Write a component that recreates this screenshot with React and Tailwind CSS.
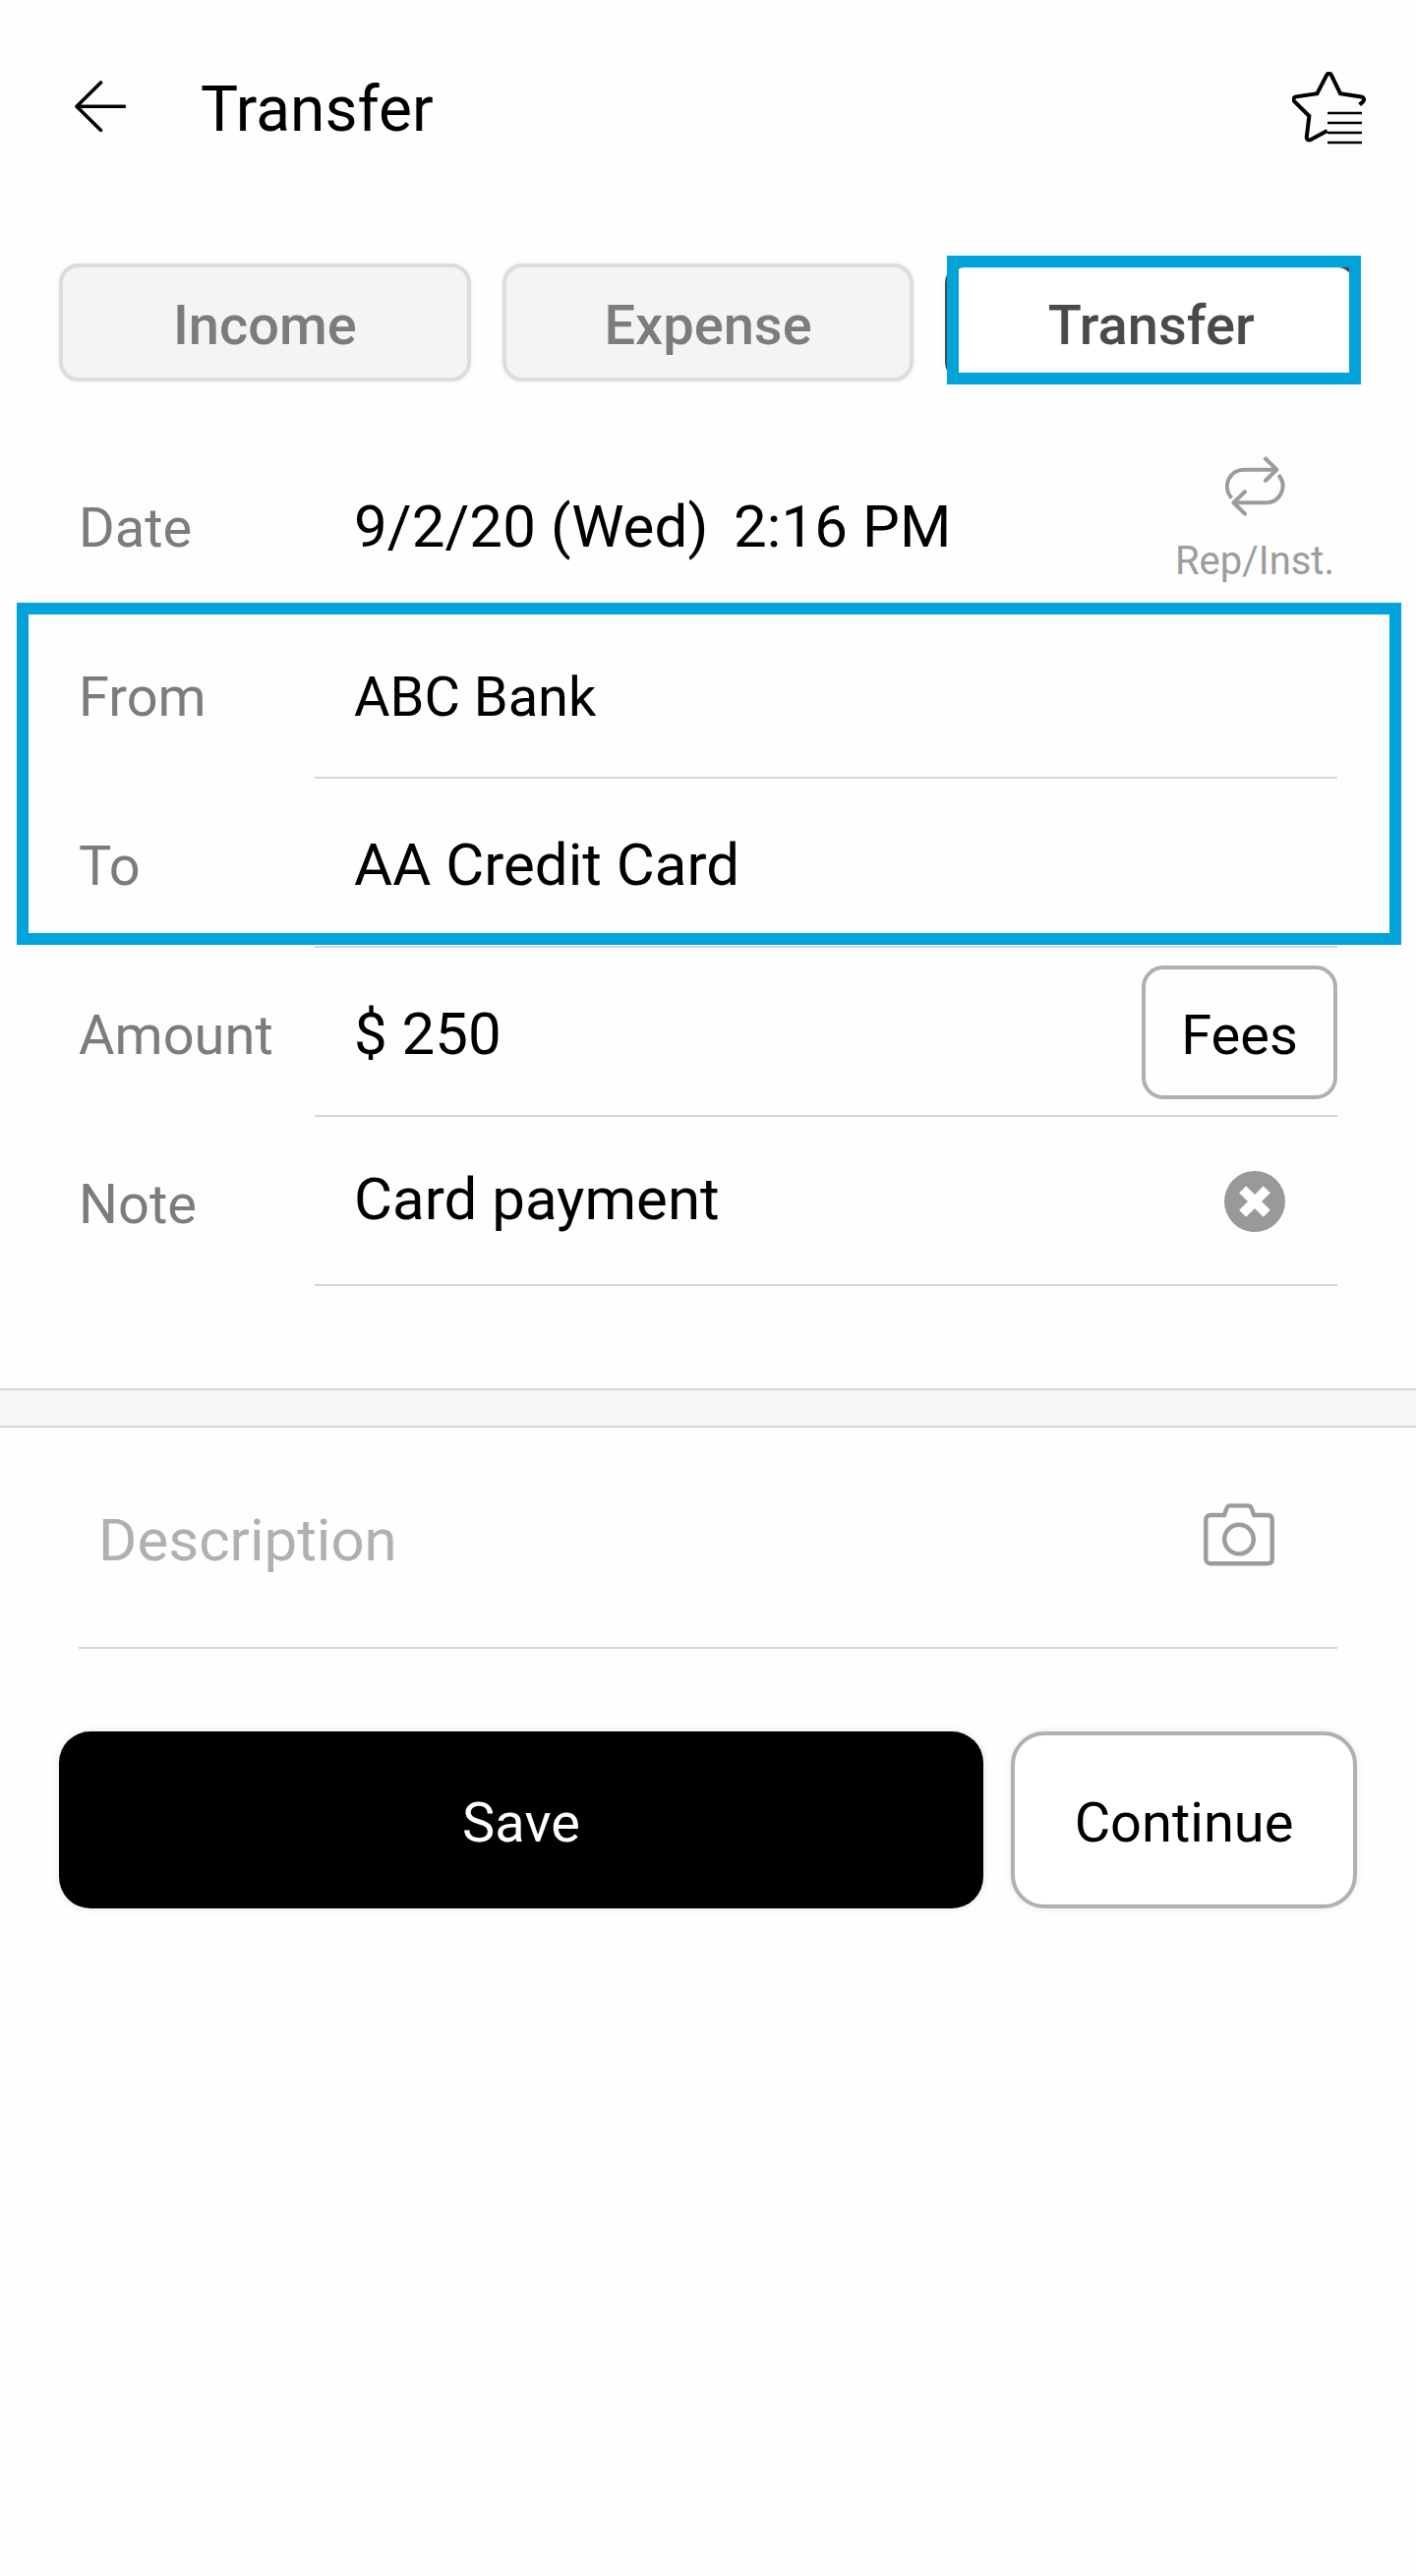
import React, { useState } from 'react'

const tabs = ['Income', 'Expense', 'Transfer']

const BackIcon = () => (
    <svg className='w-[52px] h-[52px]' viewBox='0 0 52 52' fill='none' stroke='currentColor' strokeWidth='3.6' strokeLinecap='round' strokeLinejoin='round'>
        <path d='M26.5 2 2 26.3 26.5 50.5' />
        <path d='M2.5 26.3H50.5' />
    </svg>
)

const StarListIcon = () => (
    <svg className='w-[76px] h-[74px]' viewBox='0 0 76 74' fill='none' stroke='currentColor'>
        <path
            d='M35.7 60 19 69c-2.4 1.2-4.5-.2-4.2-2.7l2.6-21.2L2.3 30.2c-1.7-1.8-.8-4.4 1.6-4.8L25.4 22.2 35.3 3.2c1.1-2.1 3.4-2.1 4.5 0L49 22.2l21.6 3.3c2.4.4 3.3 3 1.6 4.8L68.6 33.5'
            strokeWidth='4'
            strokeLinejoin='miter'
        />
        <path d='M36 42H71M36 52H71M36 62H71M36 72H71' strokeWidth='2.6' />
    </svg>
)

const RepeatIcon = () => (
    <svg className='w-[62px] h-[62px]' viewBox='0 0 62 62' fill='none' stroke='currentColor' strokeWidth='4' strokeLinecap='round'>
        <path d='M5.5 41.2A17 17 0 0 1 19 13.7H52' />
        <path d='M41 2.5 52.3 13.7 41 24.8' strokeLinejoin='round' />
        <path d='M55.2 20.3A17 17 0 0 1 42.5 47.3H9' />
        <path d='M20 36.2 8.5 47.3 20 58.6' strokeLinejoin='round' />
    </svg>
)

const ClearIcon = () => (
    <svg className='w-[62px] h-[62px]' viewBox='0 0 62 62'>
        <circle cx='31' cy='31' r='31' fill='#999999' />
        <path d='M18.7 18.7 43.3 43.3M43.3 18.7 18.7 43.3' stroke='#ffffff' strokeWidth='10' />
    </svg>
)

const CameraIcon = () => (
    <svg className='w-[72px] h-[64px]' viewBox='0 0 72 64' fill='none' stroke='currentColor' strokeWidth='4.4'>
        <path d='M2.3 17Q2.3 12 7.3 12H20.8L23.4 5.2Q24.5 2.4 27.3 2.4H44.8Q47.6 2.4 48.7 5.2L51.3 12H64.7Q69.7 12 69.7 17V56.4Q69.7 61.2 64.7 61.2H7.3Q2.3 61.2 2.3 56.4Z' />
        <circle cx='36' cy='36.6' r='14.8' />
    </svg>
)

// One line of the form: grey label on the left, value above a divider
const Row = ({ label, children, divider = true }) => (
    <div className='flex h-[172px] pl-20 pr-20'>
        <p className='w-60 shrink-0 pt-14 text-[56px] leading-[66px] text-[#7c7c7c]'>{label}</p>
        <div className={`flex flex-1 justify-between pl-10 border-b-2 ${divider ? 'border-[#d6d6d6]' : 'border-transparent'}`}>
            {children}
        </div>
    </div>
)

const App = () => {

    const [active, setActive] = useState('Transfer')

    return (
        <div className='w-[1440px] h-[2620px] bg-[#fefefe] overflow-hidden text-black font-[Roboto,sans-serif]'>
            {/* Header */}
            <div className='flex h-[268px] items-start justify-between pl-[76px] pr-[50px]'>
                <div className='flex'>
                    <div className='pt-[82px]'><BackIcon /></div>
                    <h1 className='pt-[74px] pl-[76px] text-[64px] leading-[75px]'>Transfer</h1>
                </div>
                <div className='pt-[73px]'><StarListIcon /></div>
            </div>

            {/* Tabs */}
            <div className='flex gap-8 h-[120px] px-[60px]'>
                {tabs.map((tab) => (
                    <div key={tab} className='relative flex-1'>
                        <button
                            onClick={() => setActive(tab)}
                            className={`w-full h-full border-4 rounded-[20px] pt-1.5 text-[56px] leading-[66px] font-medium shadow-[0_0_6px_rgba(0,0,0,0.06)] ${active === tab ? 'bg-white border-[#4a4a4a] text-[#4a4a4a]' : 'bg-[#f4f4f4] border-[#dcdcdc] text-[#7c7c7c]'}`}
                        >
                            {tab}
                        </button>
                        {active === tab && (
                            <div className='absolute -top-2 left-[1.4px] -right-[4.4px] h-[131px] border-[12.6px] border-[#00a3da] pointer-events-none'></div>
                        )}
                    </div>
                ))}
            </div>

            {/* Form */}
            <div className='relative pt-[60px]'>
                <Row label='Date' divider={false}>
                    <div className='flex pt-[53px] text-[60px] leading-[70px]'>
                        <p className='w-[386px] whitespace-nowrap tracking-[0.1px]'>9/2/20 (Wed)</p>
                        <p className='whitespace-nowrap tracking-[0.1px]'>2:16 PM</p>
                    </div>
                    <div className='flex flex-col items-center pt-4 pr-[3px] text-[#9c9c9c]'>
                        <div className='pl-0.5'><RepeatIcon /></div>
                        <p className='pt-[21px] text-[40px] leading-[47px]'>Rep/Inst.</p>
                    </div>
                </Row>
                <Row label='From'>
                    <p className='pt-14 text-[56px] leading-[66px]'>ABC Bank</p>
                </Row>
                <Row label='To'>
                    <p className='pt-[53px] text-[60px] leading-[70px]'>AA Credit Card</p>
                </Row>
                <Row label='Amount'>
                    <p className='pt-[53px] text-[60px] leading-[70px]'>$ 250</p>
                    <button className='mt-[18px] w-[199px] h-[136px] pt-1.5 border-4 border-[#b0b0b0] rounded-[22px] text-[56px] leading-[66px]'>Fees</button>
                </Row>
                <Row label='Note'>
                    <p className='pt-[49px] text-[60px] leading-[70px]'>Card payment</p>
                    <div className='pt-[55px] pr-[53px]'><ClearIcon /></div>
                </Row>
                <div className='absolute top-[225px] left-[16.6px] w-[1408px] h-[348px] border-[12.6px] border-[#00a3da] pointer-events-none'></div>
            </div>

            {/* Description */}
            <div className='mt-[104px] h-10 border-y-2 border-[#d6d6d6] bg-[#f6f6f8]'></div>
            <div className='mx-20 flex h-[225px] justify-between border-b-2 border-[#d6d6d6] pl-5 pr-16'>
                <p className='pt-20 text-[60px] leading-[70px] text-[#b0b0b0]'>Description</p>
                <div className='pt-[77px] text-[#9c9c9c]'><CameraIcon /></div>
            </div>

            {/* Buttons */}
            <div className='flex gap-7 mt-[84px] h-[180px] px-[60px] text-[56px] leading-[66px]'>
                <button className='flex-1 pt-1.5 rounded-[32px] bg-black text-white shadow-[0_0_8px_rgba(0,0,0,0.1)]'>Save</button>
                <button className='w-[352px] pt-1.5 border-4 border-[#b0b0b0] rounded-[34px] bg-white shadow-[0_0_8px_rgba(0,0,0,0.08)]'>Continue</button>
            </div>
        </div>
    )
}

export default App
